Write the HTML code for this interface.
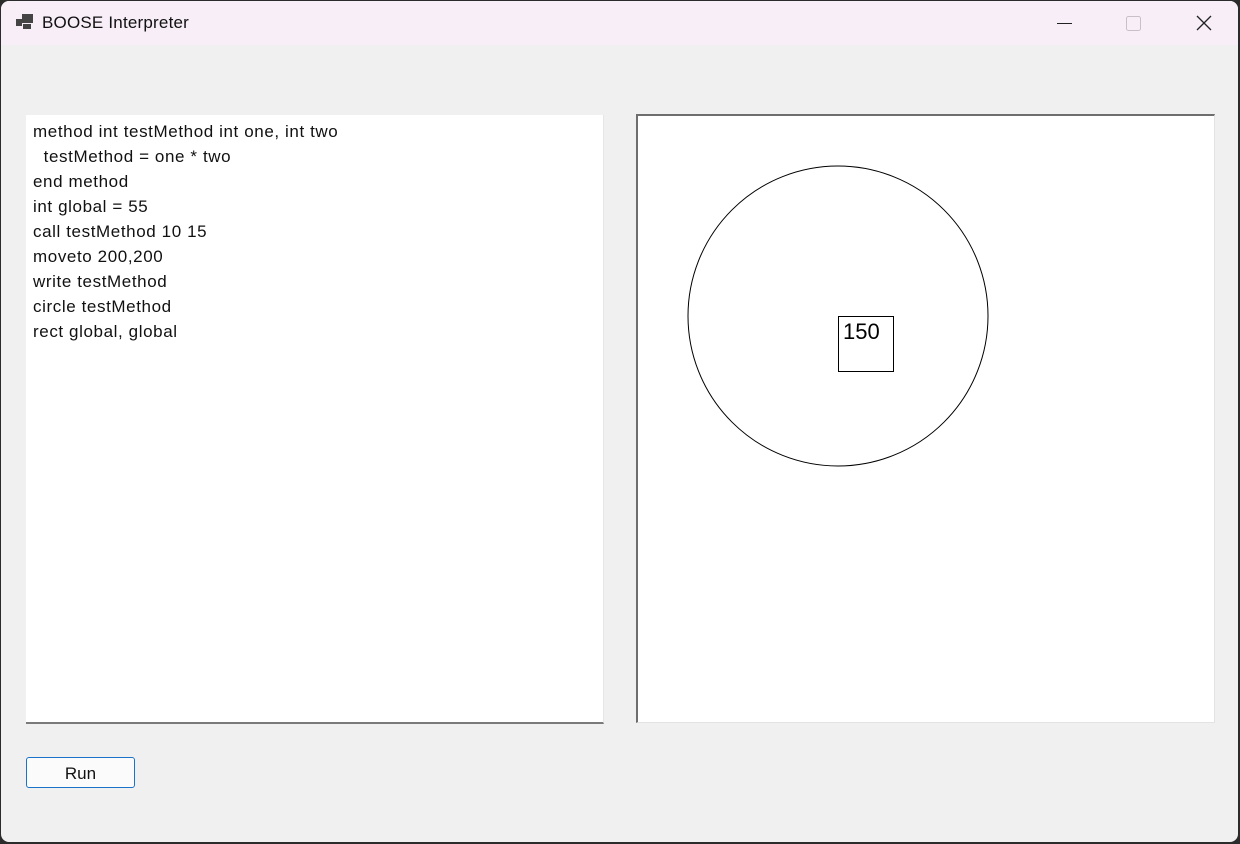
<!DOCTYPE html>
<html><head><style>
html,body{margin:0;padding:0;width:1240px;height:844px;overflow:hidden;background:#2b2b2b;}
.win{position:absolute;left:1px;top:1px;width:1237px;height:841px;background:#f0f0f0;border-radius:8px;overflow:hidden;}
.title{position:absolute;left:0;top:0;right:0;height:44px;background:#f7eef7;}
.title .t{position:absolute;left:41px;top:12px;font:17px "Liberation Sans",sans-serif;color:#111;letter-spacing:0.2px;}
.code{position:absolute;left:25px;top:114px;width:577px;height:603px;padding-top:4px;background:#fff;border-bottom:2px solid #7a7a7a;border-right:1px solid #e6e6e6;}
.code div{font:17px "Liberation Sans",sans-serif;letter-spacing:0.6px;color:#111;height:25px;line-height:25px;padding-left:7px;white-space:pre;}
.canvas{position:absolute;left:635px;top:113px;width:576px;height:606px;background:#fff;border-top:2px solid #6e6e6e;border-left:2px solid #6e6e6e;border-right:1px solid #e3e3e3;border-bottom:1px solid #e3e3e3;}
.btn{position:absolute;left:25px;top:756px;width:107px;height:29px;border:1px solid #1a73c8;border-radius:3px;background:#fbfbfb;font:17px "Liberation Sans",sans-serif;text-align:center;line-height:31px;color:#111;}
</style></head><body>
<div class="win">
<div class="title">
<svg style="position:absolute;left:15px;top:13px" width="18" height="16"><rect x="6" y="0" width="11" height="9" fill="#444"/><rect x="0" y="5" width="6" height="7" fill="#444"/><rect x="7" y="10" width="8" height="5" fill="#444"/></svg>
<div class="t">BOOSE Interpreter</div>
<svg style="position:absolute;left:1050px;top:12px" width="170" height="22"><line x1="6" y1="10.5" x2="21" y2="10.5" stroke="#222" stroke-width="1"/><rect x="75.5" y="3.5" width="14" height="14" rx="2" fill="none" stroke="#c8c0c8"/><path d="M146 3 L160 17 M160 3 L146 17" stroke="#222" stroke-width="1.3"/></svg>
</div>
<div class="code">
<div>method int testMethod int one, int two</div>
<div>  testMethod = one * two</div>
<div>end method</div>
<div>int global = 55</div>
<div>call testMethod 10 15</div>
<div>moveto 200,200</div>
<div>write testMethod</div>
<div>circle testMethod</div>
<div>rect global, global</div>
</div>
<div class="canvas">
<svg width="576" height="606" style="position:absolute;left:-1px;top:-1px">
<circle cx="201" cy="201" r="150" fill="none" stroke="#000" stroke-width="1"/>
<rect x="201.5" y="201.5" width="55" height="55" fill="none" stroke="#000" stroke-width="1"/>
<text x="206" y="224" font-family="Liberation Sans" font-size="22" fill="#000">150</text>
</svg>
</div>
<div class="btn">Run</div>
</div>
</body></html>
